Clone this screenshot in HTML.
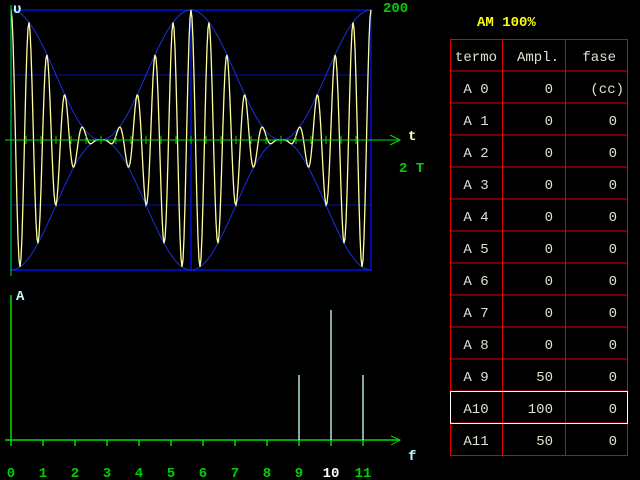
<!DOCTYPE html>
<html><head><meta charset="utf-8"><style>
body{margin:0;background:#000;width:640px;height:480px;overflow:hidden;font-family:"Liberation Mono",monospace}
svg{position:absolute;left:0;top:0}
text{font-family:"Liberation Mono",monospace;font-size:14px}
</style></head><body>
<svg id="s" width="640" height="480" xmlns="http://www.w3.org/2000/svg">
<g id="g"></g>
<text x="383" y="12" fill="#00d000" font-weight="bold">200</text>
<text x="408" y="140" fill="#ffffc0" font-weight="bold">t</text>
<text x="399" y="172" fill="#00d000" font-weight="bold">2 T</text>
<text x="13" y="13" fill="#c0ffff" font-weight="bold">υ</text>
<text x="16" y="300" fill="#c0ffff" font-weight="bold">A</text>
<text x="408" y="460" fill="#c0ffff" font-weight="bold">f</text>
<text x="477" y="26" fill="#ffff00" font-weight="bold" font-size="15">AM 100%</text>
<g id="lab" fill="#00d000" font-size="16" font-weight="bold" text-anchor="middle"></g>
<g id="tab" fill="#e0e0d0" font-size="16"></g>
</svg>
<script>
(function(){
var g=document.getElementById('g'),ns='http://www.w3.org/2000/svg';
function el(tg,a,p){var e=document.createElementNS(ns,tg);for(var k in a)e.setAttribute(k,a[k]);(p||g).appendChild(e);return e;}
el('rect',{x:11,y:10,width:360,height:260,fill:'none',stroke:'#0010e0','stroke-width':1.5});
el('line',{x1:11,y1:75,x2:371,y2:75,stroke:'#0010b0'});
el('line',{x1:11,y1:205,x2:371,y2:205,stroke:'#0010b0'});
el('line',{x1:191,y1:10,x2:191,y2:270,stroke:'#0010e0','stroke-width':1.5});
var e1='',e2='',w='';
for(var x=11;x<=371;x+=0.5){var ph=(x-11)/180*2*Math.PI;var en=65*(1+Math.cos(ph));
e1+=(x==11?'M':'L')+x+' '+(140-en).toFixed(2);e2+=(x==11?'M':'L')+x+' '+(140+en).toFixed(2);}
for(var x=11;x<=371;x+=1){var ph=(x-11)/180*2*Math.PI;var en=65*(1+Math.cos(ph));
w+=(x==11?'M':'L')+x+' '+(140-en*Math.cos(10*ph)).toFixed(1);}
el('path',{d:e1,fill:'none',stroke:'#1830e0'});el('path',{d:e2,fill:'none',stroke:'#1830e0'});
el('path',{d:w,fill:'none',stroke:'#ffffa0','stroke-width':1.3});
el('line',{x1:5,y1:140,x2:400,y2:140,stroke:'#00e000'});
el('line',{x1:11,y1:5,x2:11,y2:276,stroke:'#00e000'});
el('path',{d:'M390 135 L400 140 L390 145',fill:'none',stroke:'#00e000'});
for(var x2=26;x2<371;x2+=15)el('line',{x1:x2,y1:136,x2:x2,y2:144,stroke:'#00e000'});
el('line',{x1:5,y1:440,x2:400,y2:440,stroke:'#00e000','stroke-width':1.5});
el('line',{x1:11,y1:295,x2:11,y2:440,stroke:'#00e000','stroke-width':1.5});
el('path',{d:'M391 436 L400 440 L391 445',fill:'none',stroke:'#00e000'});
var lab=document.getElementById('lab');
for(var k=0;k<12;k++){var xx=11+32*k;el('line',{x1:xx,y1:440,x2:xx,y2:446,stroke:'#00e000','stroke-width':1.5});
var tx=el('text',{x:xx,y:477},lab);tx.textContent=k;if(k==10)tx.setAttribute('fill','#ffffff');}
el('line',{x1:299,y1:375,x2:299,y2:440,stroke:'#d0ffff','stroke-width':1.3});
el('line',{x1:331,y1:310,x2:331,y2:440,stroke:'#d0ffff','stroke-width':1.3});
el('line',{x1:363,y1:375,x2:363,y2:440,stroke:'#d0ffff','stroke-width':1.3});
var tab=document.getElementById('tab');
for(var r=1;r<13;r++)el('line',{x1:450,y1:39+32*r,x2:627,y2:39+32*r,stroke:'#e00000'});
el('rect',{x:450.5,y:39.5,width:177,height:416,fill:'none',stroke:'#e00000'});
el('line',{x1:502.5,y1:39,x2:502.5,y2:455,stroke:'#e00000'});
el('line',{x1:565.5,y1:39,x2:565.5,y2:455,stroke:'#e00000'});
el('rect',{x:450.5,y:391.5,width:177,height:32,fill:'none',stroke:'#ffffff'});
function tt(x,y,s,a,f){var e=el('text',{x:x,y:y,'text-anchor':a||'start'},tab);e.textContent=s;if(f)e.setAttribute('fill',f);return e;}
tt(476,61,'termo','middle');tt(559,61,'Ampl.','end');tt(616,61,'fase','end');
var amp=[0,0,0,0,0,0,0,0,0,50,100,50];
for(var i=0;i<12;i++){var y=61+32*(i+1);var n=i<10?'A '+i:'A'+i;tt(476,y,n,'middle');tt(553,y,String(amp[i]),'end');tt(i==0?624:617,y,i==0?'(cc)':'0','end');}
})();
</script>
</body></html>
